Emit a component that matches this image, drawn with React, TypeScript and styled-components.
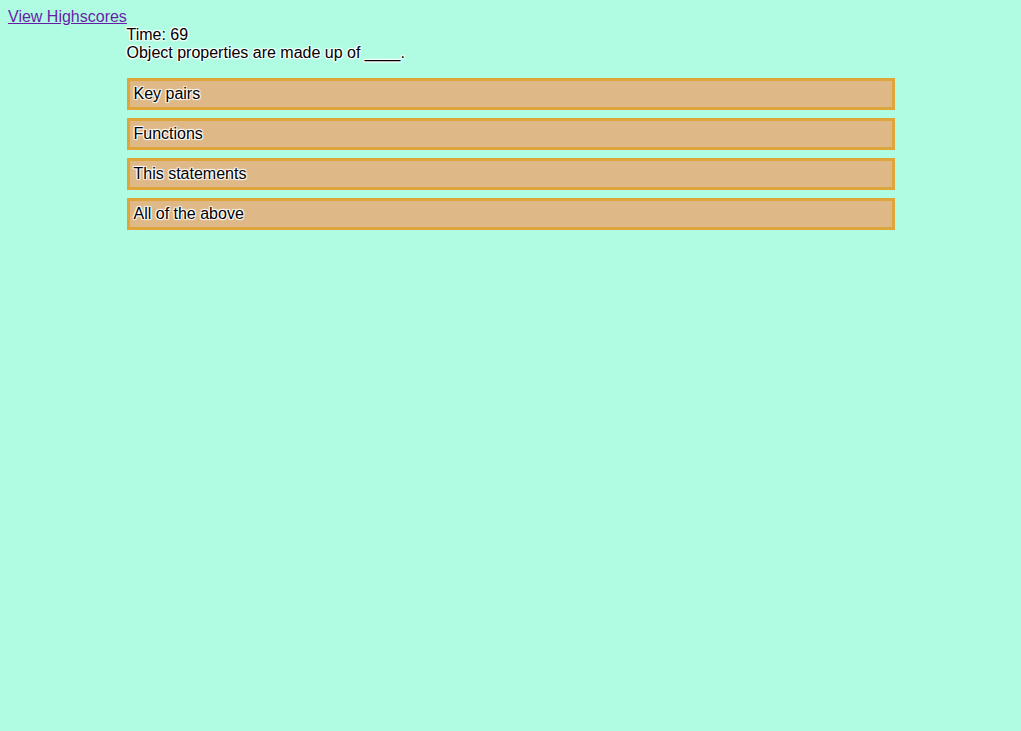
import React from "react";
import styled, { createGlobalStyle } from "styled-components";

const Global = createGlobalStyle`
  html, body { background: #b0fce3; }
  body { margin: 8px; font-family: "Liberation Sans", Arial, sans-serif; font-size: 16px; color: #000; }
`;

const Link = styled.a`
  color: #681da8;
  text-decoration: underline;
  font-size: 16px;
`;

const Quiz = styled.div`
  max-width: 768px;
  margin: 0 auto;
  text-shadow: 1px 1px 1px #fff, -1px -1px 1px #fff, 1px -1px 1px #fff, -1px 1px 1px #fff;
`;

const Line = styled.div`
  line-height: 18px;
`;

const Choices = styled.div`
  display: flex;
  flex-direction: column;
  gap: 8px;
  margin-top: 16px;
`;

const Choice = styled.div`
  background: #deb887;
  border: 3px solid #dea53a;
  padding: 4px 4px;
  line-height: 18px;
  cursor: pointer;
`;

const choices = ["Key pairs", "Functions", "This statements", "All of the above"];

export default function App() {
  return (
    <>
      <Global />
      <Link href="#">View Highscores</Link>
      <Quiz>
        <Line>Time: 69</Line>
        <Line>Object properties are made up of ____.</Line>
        <Choices>
          {choices.map((c) => (
            <Choice key={c}>{c}</Choice>
          ))}
        </Choices>
      </Quiz>
    </>
  );
}
